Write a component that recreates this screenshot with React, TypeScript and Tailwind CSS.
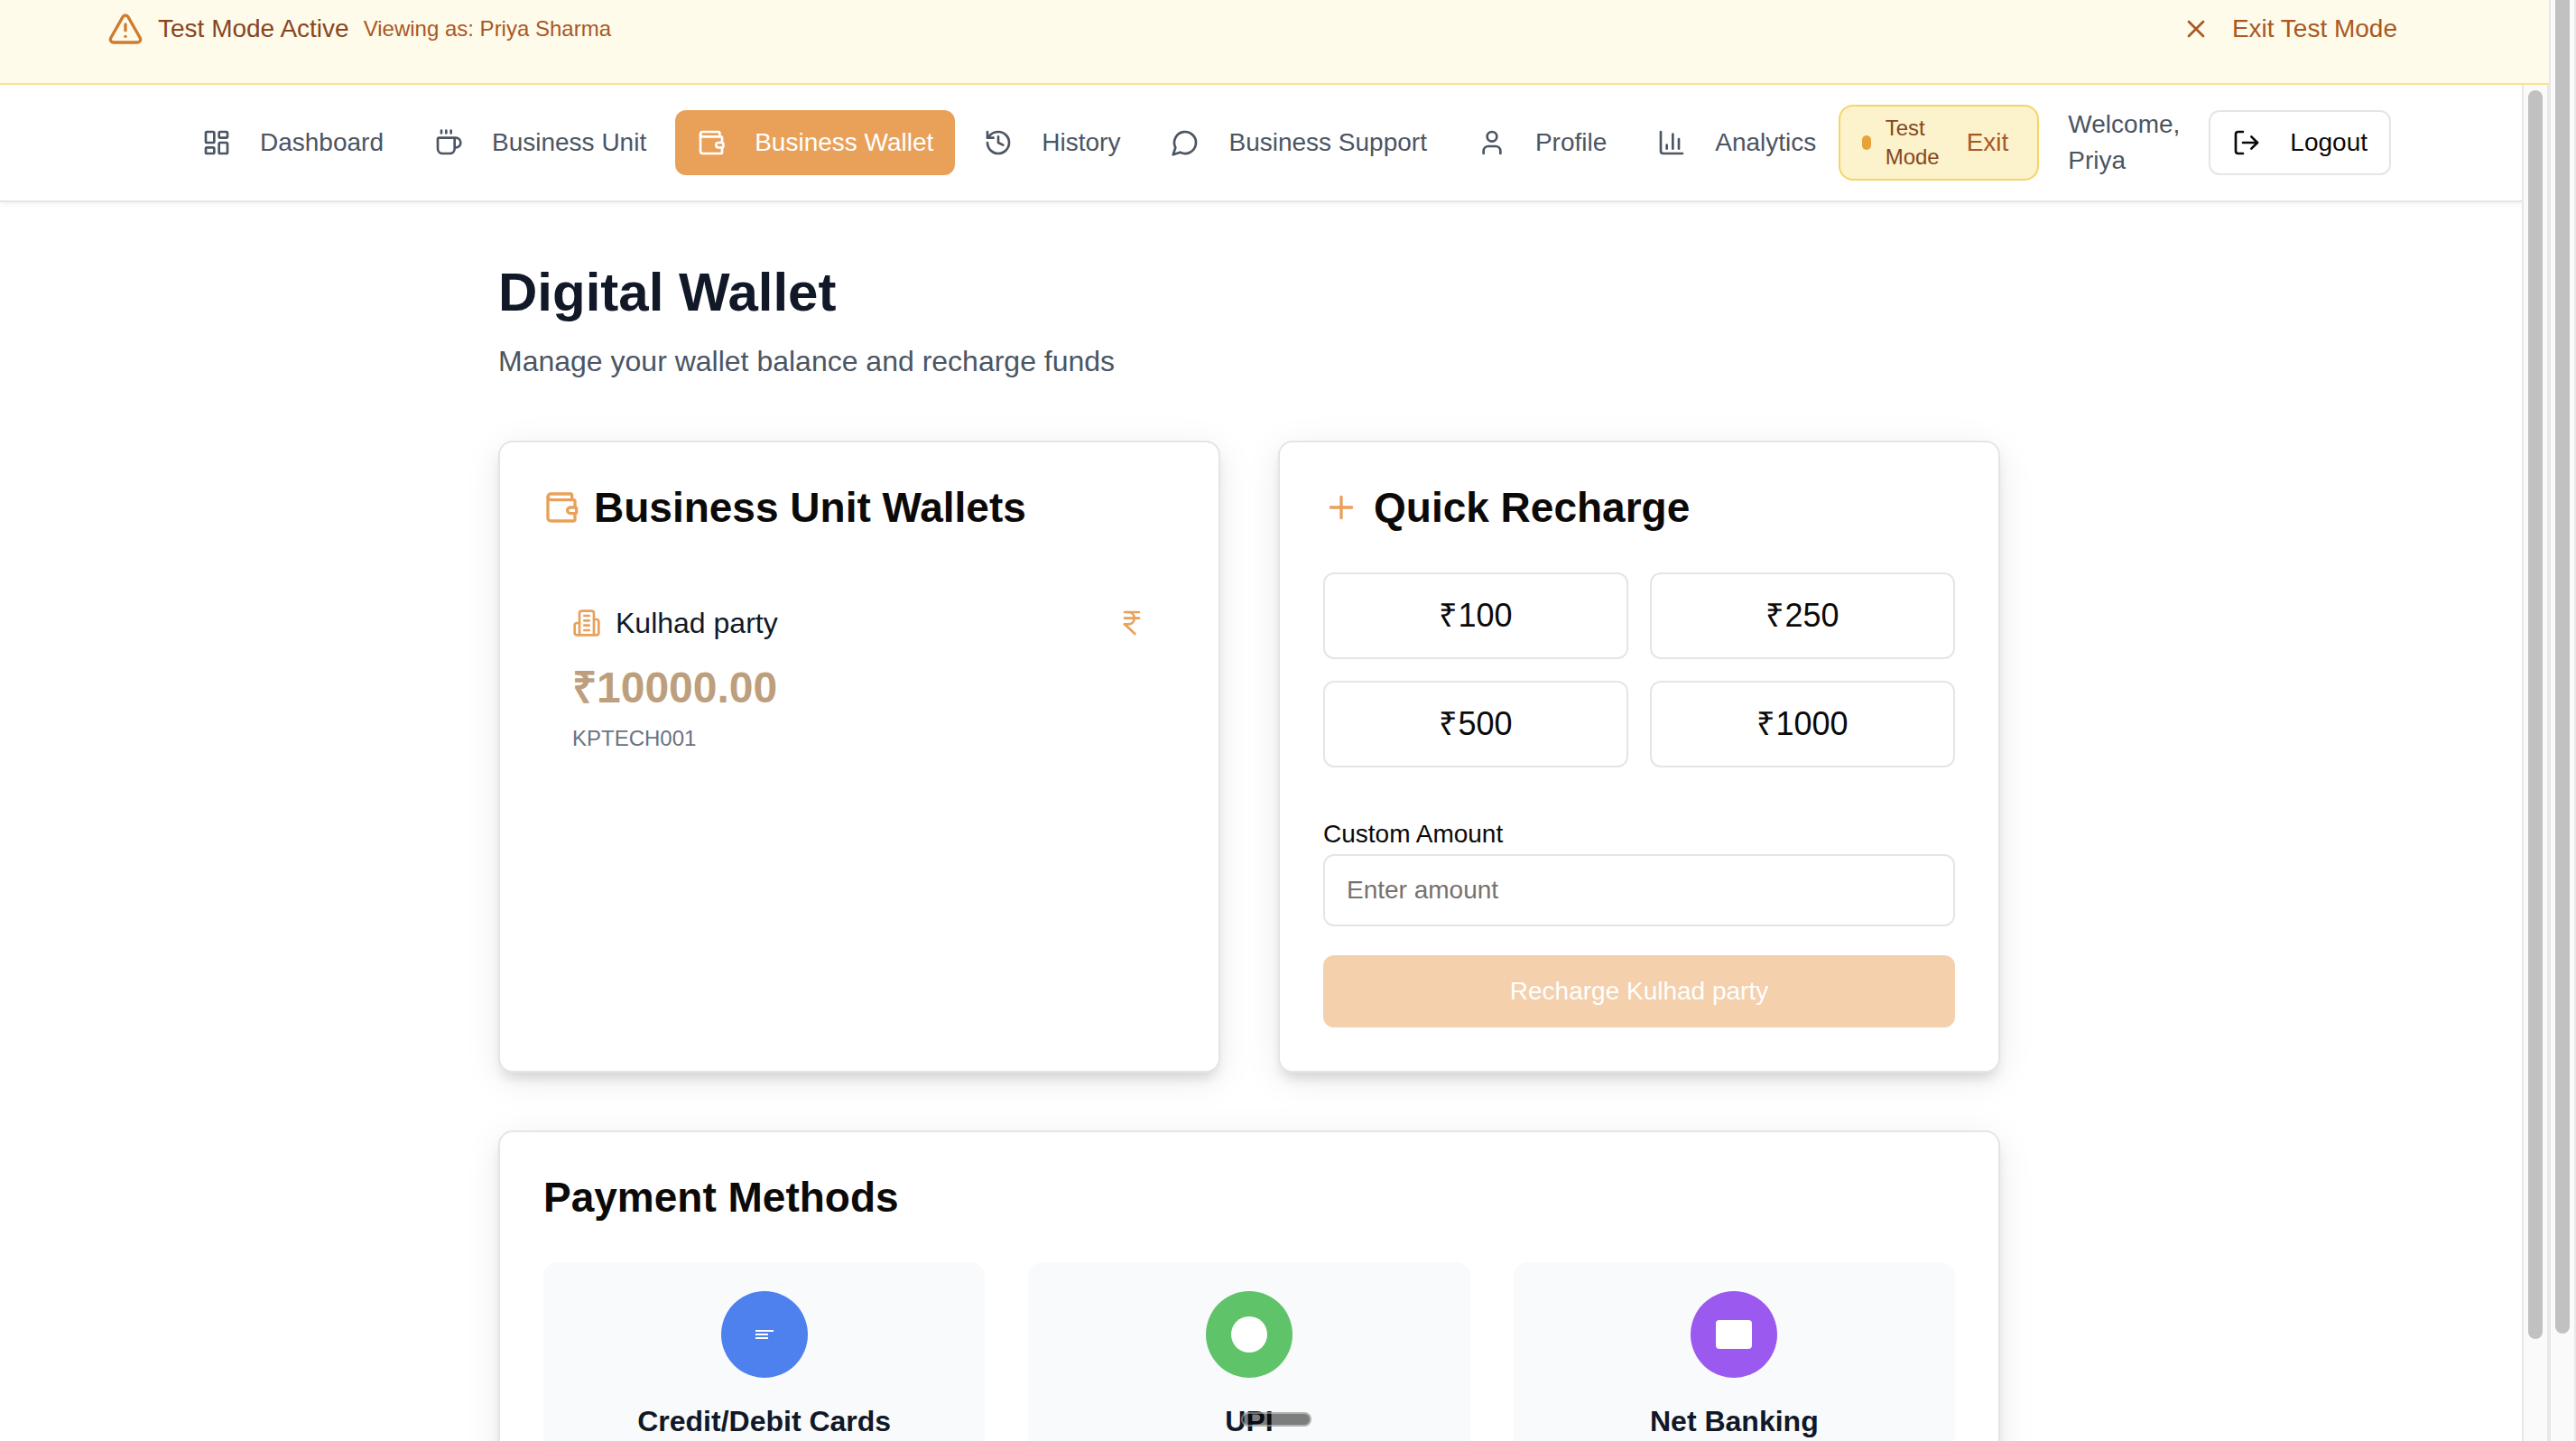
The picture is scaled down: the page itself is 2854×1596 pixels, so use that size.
import type { ReactNode } from "react";
import {
  TriangleAlert,
  X,
  LayoutDashboard,
  Coffee,
  Wallet,
  History,
  User,
  LogOut,
  Plus,
  IndianRupee,
  type LucideIcon,
} from "lucide-react";

const iconProps = {
  viewBox: "0 0 24 24",
  fill: "none",
  stroke: "currentColor",
  strokeWidth: 2,
  strokeLinecap: "round",
  strokeLinejoin: "round",
} as const;

function ChatIcon({ className }: { className?: string }) {
  return (
    <svg {...iconProps} className={className} aria-hidden="true">
      <path d="M7.9 20A9 9 0 1 0 4 16.1L2 22Z" />
    </svg>
  );
}

function ChartIcon({ className }: { className?: string }) {
  return (
    <svg {...iconProps} className={className} aria-hidden="true">
      <path d="M3 3v16a2 2 0 0 0 2 2h16" />
      <path d="M8 17v-3" />
      <path d="M13 17V5" />
      <path d="M18 17V9" />
    </svg>
  );
}

function BuildingIcon({ className }: { className?: string }) {
  return (
    <svg {...iconProps} className={className} aria-hidden="true">
      <path d="M6 22V4a2 2 0 0 1 2-2h8a2 2 0 0 1 2 2v18Z" />
      <path d="M6 12H4a2 2 0 0 0-2 2v6a2 2 0 0 0 2 2h2" />
      <path d="M18 9h2a2 2 0 0 1 2 2v9a2 2 0 0 1-2 2h-2" />
      <path d="M10 6h4" />
      <path d="M10 10h4" />
      <path d="M10 14h4" />
      <path d="M10 18h4" />
    </svg>
  );
}

type NavItem = {
  label: string;
  icon: LucideIcon | typeof ChartIcon;
  active?: boolean;
};

const navItems: NavItem[] = [
  { label: "Dashboard", icon: LayoutDashboard },
  { label: "Business Unit", icon: Coffee },
  { label: "Business Wallet", icon: Wallet, active: true },
  { label: "History", icon: History },
  { label: "Business Support", icon: ChatIcon },
  { label: "Profile", icon: User },
  { label: "Analytics", icon: ChartIcon },
];

const amounts = ["₹100", "₹250", "₹500", "₹1000"];

function TestBanner() {
  return (
    <div className="flex h-[94px] shrink-0 items-start justify-between border-b-2 border-[#fae391] bg-[#fffbeb] pr-[168px] pl-[119px]">
      <div className="flex h-16 items-center gap-4">
        <TriangleAlert className="size-10 text-[#d07b2c]" />
        <span className="text-[28px] text-[#874620]">Test Mode Active</span>
        <span className="text-2xl text-[#a85823]">Viewing as: Priya Sharma</span>
      </div>
      <button className="flex h-16 items-center gap-6 text-[28px] text-[#a85823]">
        <X className="size-8" />
        Exit Test Mode
      </button>
    </div>
  );
}

function NavBar() {
  return (
    <header className="flex h-[130px] items-center justify-between border-b-2 border-[#e5e5e5] bg-white pr-[145px] pl-[200px] shadow-[0_2px_6px_rgba(0,0,0,0.06)]">
      <nav className="flex items-center gap-2">
        {navItems.map(({ label, icon: Icon, active }) => (
          <a
            key={label}
            href="#"
            className={
              active
                ? "flex h-[72px] items-center gap-8 rounded-xl bg-[#e9a159] px-6 text-[28px] whitespace-nowrap text-white"
                : "flex h-[72px] items-center gap-8 rounded-xl px-6 text-[28px] whitespace-nowrap text-[#4b5563]"
            }
          >
            <Icon className="size-8" />
            {label}
          </a>
        ))}
      </nav>
      <div className="flex items-center gap-8">
        <div className="flex h-[84px] items-center rounded-2xl border-2 border-[#f5d565] bg-[#fcf2cc] pr-8 pl-6">
          <span className="h-4 w-2.5 rounded-full bg-[#e8a23c]" />
          <span className="ml-4 w-[90px] text-2xl text-[#874620]">
            Test
            <br />
            Mode
          </span>
          <button className="text-[28px] text-[#a85823]">Exit</button>
        </div>
        <span className="w-[124px] text-[28px] leading-10 text-[#4b5563]">Welcome, Priya</span>
        <button className="flex h-[72px] items-center gap-8 rounded-xl border-2 border-[#e5e5e5] px-6 text-[28px] text-[#0c0a09]">
          <LogOut className="size-8" />
          Logout
        </button>
      </div>
    </header>
  );
}

function Card({ title, icon, children }: { title: string; icon?: ReactNode; children: ReactNode }) {
  return (
    <section className="rounded-2xl border-2 border-[#e5e5e5] bg-white p-12 shadow-[0_8px_40px_rgba(0,0,0,0.08),0_10px_14px_-4px_rgba(0,0,0,0.13)]">
      <h2 className="mb-12 flex h-12 items-center gap-4 text-[46px] leading-[48px] font-bold text-[#0c0a09]">
        {icon}
        {title}
      </h2>
      {children}
    </section>
  );
}

function UnitWallets() {
  return (
    <Card title="Business Unit Wallets" icon={<Wallet className="size-10 text-[#e9a159]" />}>
      <div className="p-8">
        <div className="flex h-12 items-center justify-between">
          <div className="flex items-center gap-4">
            <BuildingIcon className="size-8 text-[#e9a159]" />
            <span className="text-[32px] leading-[48px] text-[#111827]">Kulhad party</span>
          </div>
          <IndianRupee className="size-8 text-[#e9a159]" />
        </div>
        <p className="mt-4 text-5xl leading-[64px] font-bold text-[#bd9f7e]">₹10000.00</p>
        <p className="mt-2 text-2xl leading-8 text-[#6b7280]">KPTECH001</p>
      </div>
    </Card>
  );
}

function QuickRecharge() {
  return (
    <Card title="Quick Recharge" icon={<Plus className="size-10 text-[#e9a159]" />}>
      <div className="grid grid-cols-2 gap-6">
        {amounts.map((amount) => (
          <button
            key={amount}
            className="h-24 rounded-xl border-2 border-[#e5e5e5] text-4xl text-[#0c0a09]"
          >
            {amount}
          </button>
        ))}
      </div>
      <div className="mt-[52px]">
        <label htmlFor="custom-amount" className="block text-[28px] leading-[44px] text-[#0c0a09]">
          Custom Amount
        </label>
        <input
          id="custom-amount"
          type="text"
          placeholder="Enter amount"
          className="h-20 w-full rounded-xl border-2 border-[#e5e5e5] px-6 text-[28px] placeholder:text-[#78716c]"
        />
      </div>
      <button className="mt-8 h-20 w-full rounded-xl bg-[#f4d0ac] text-[28px] text-white">
        Recharge Kulhad party
      </button>
    </Card>
  );
}

function Method({ label, tone, children }: { label: string; tone: string; children?: ReactNode }) {
  return (
    <div className="flex flex-col items-center rounded-2xl bg-[#f9fafb] px-8 pt-8 pb-20">
      <div className={`flex size-24 items-center justify-center rounded-full ${tone}`}>{children}</div>
      <h3 className="mt-6 text-[32px] leading-[48px] font-bold text-[#111827]">{label}</h3>
    </div>
  );
}

function PaymentMethods() {
  return (
    <Card title="Payment Methods">
      <div className="grid grid-cols-3 gap-12">
        <Method label="Credit/Debit Cards" tone="bg-[#4e80ee]">
          <svg viewBox="0 0 20 10" className="h-2.5 w-5" fill="#fff" aria-hidden="true">
            <path d="M0 0h20v2H0zM0 4h14v2H0zM0 8h14v2H0z" />
          </svg>
        </Method>
        <Method label="UPI" tone="bg-[#5fc36a]">
          <span className="size-10 rounded-full bg-white" />
        </Method>
        <Method label="Net Banking" tone="bg-[#9b59f0]">
          <span className="h-8 w-10 rounded-sm bg-white" />
        </Method>
      </div>
    </Card>
  );
}

export default function App() {
  return (
    <div className="relative flex h-screen overflow-hidden bg-white font-['Liberation_Sans',Arial,sans-serif]">
      <div className="flex min-w-0 flex-1 flex-col">
        <TestBanner />
        <div className="flex min-h-0 flex-1">
          <div className="min-w-0 flex-1 overflow-hidden">
            <NavBar />
            <main className="pt-16 pr-[26px]">
              <div className="mx-auto max-w-[1664px]">
                <h1 className="text-[60px] leading-[72px] font-bold text-[#111827]">Digital Wallet</h1>
                <p className="mt-4 text-[32px] leading-[48px] text-[#4b5563]">
                  Manage your wallet balance and recharge funds
                </p>
                <div className="mt-16 mb-16 grid grid-cols-2 gap-16">
                  <UnitWallets />
                  <QuickRecharge />
                </div>
                <PaymentMethods />
              </div>
            </main>
          </div>
          <div className="flex w-[30px] justify-center border-x-2 border-[#e8e8e8] bg-[#fafafa] pt-1.5">
            <div className="h-[1383px] w-4 rounded-full bg-[#c1c1c1]" />
          </div>
        </div>
      </div>
      <div className="flex w-[30px] justify-center border-x-2 border-[#e8e8e8] bg-[#fafafa]">
        <div className="h-[1477px] w-4 rounded-b-full bg-[#c1c1c1]" />
      </div>
      <div className="absolute bottom-4 left-[1375px] h-4 w-[78px] rounded-full border-2 border-white/40 bg-black/50" />
    </div>
  );
}
